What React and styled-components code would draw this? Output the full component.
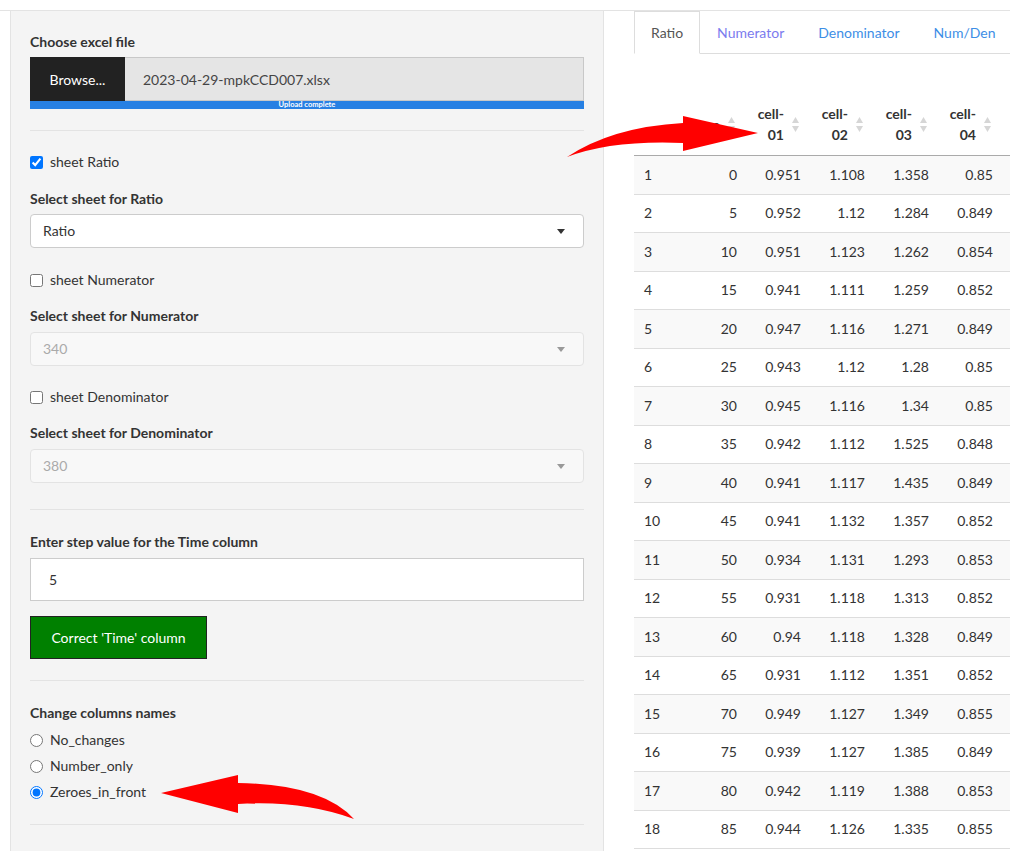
import React from "react"
import styled, { createGlobalStyle } from "styled-components"

const GlobalStyle = createGlobalStyle`
html, body {
  margin: 0;
  padding: 0;
  background: #fff;
  overflow: hidden;
}
body {
  font-family: 'Lato', 'Noto Sans', sans-serif;
  font-size: 14px;
  color: #333;
}
`

const rows = [
    [1, 0, "0.951", "1.108", "1.358", "0.85"],
    [2, 5, "0.952", "1.12", "1.284", "0.849"],
    [3, 10, "0.951", "1.123", "1.262", "0.854"],
    [4, 15, "0.941", "1.111", "1.259", "0.852"],
    [5, 20, "0.947", "1.116", "1.271", "0.849"],
    [6, 25, "0.943", "1.12", "1.28", "0.85"],
    [7, 30, "0.945", "1.116", "1.34", "0.85"],
    [8, 35, "0.942", "1.112", "1.525", "0.848"],
    [9, 40, "0.941", "1.117", "1.435", "0.849"],
    [10, 45, "0.941", "1.132", "1.357", "0.852"],
    [11, 50, "0.934", "1.131", "1.293", "0.853"],
    [12, 55, "0.931", "1.118", "1.313", "0.852"],
    [13, 60, "0.94", "1.118", "1.328", "0.849"],
    [14, 65, "0.931", "1.112", "1.351", "0.852"],
    [15, 70, "0.949", "1.127", "1.349", "0.855"],
    [16, 75, "0.939", "1.127", "1.385", "0.849"],
    [17, 80, "0.942", "1.119", "1.388", "0.853"],
    [18, 85, "0.944", "1.126", "1.335", "0.855"],
]

const SortIcon = () => (
    <SortSvg width="7" height="15" viewBox="0 0 7 15">
        <path d="M3.5 0 L7 6 L0 6 Z" fill="#d6d6d6" />
        <path d="M0 9 L7 9 L3.5 15 Z" fill="#d6d6d6" />
    </SortSvg>
)

const Arrows = () => (
    <Overlay width="1010" height="851" viewBox="0 0 1010 851">
        <path d="M567 157 Q612 127 683 123 L683 116 L758 133 L683 151 L683 143 Q612 140 567 157 Z" fill="#ff0000" />
        <path d="M161 793 L238 775 L238 783 Q322 784 354 819 Q302 800 238 804 L238 813 Z" fill="#ff0000" />
    </Overlay>
)

const App = () => {
    return (
        <Page>
            <GlobalStyle />
            <Layout>
                <Gutter />
                <Sidebar>
                    <Label $mt={0}>Choose excel file</Label>
                    <FileRow>
                        <BrowseButton>Browse...</BrowseButton>
                        <FileName>2023-04-29-mpkCCD007.xlsx</FileName>
                    </FileRow>
                    <Progress>Upload complete</Progress>
                    <Divider $mt={21} />

                    <CheckRow $mt={20}>
                        <input type="checkbox" defaultChecked />
                        <span>sheet Ratio</span>
                    </CheckRow>
                    <Label $mt={15}>Select sheet for Ratio</Label>
                    <SelectBox $mt={4}>
                        Ratio
                        <Caret />
                    </SelectBox>

                    <CheckRow $mt={21}>
                        <input type="checkbox" />
                        <span>sheet Numerator</span>
                    </CheckRow>
                    <Label $mt={14}>Select sheet for Numerator</Label>
                    <SelectBox $mt={5} $disabled>
                        340
                        <Caret $disabled />
                    </SelectBox>

                    <CheckRow $mt={20}>
                        <input type="checkbox" />
                        <span>sheet Denominator</span>
                    </CheckRow>
                    <Label $mt={14}>Select sheet for Denominator</Label>
                    <SelectBox $mt={5} $disabled>
                        380
                        <Caret $disabled />
                    </SelectBox>
                    <Divider $mt={26} />

                    <Label $mt={21}>Enter step value for the Time column</Label>
                    <NumberInput>5</NumberInput>
                    <GreenButton>Correct 'Time' column</GreenButton>
                    <Divider $mt={21} />

                    <Label $mt={21}>Change columns names</Label>
                    <CheckRow $mt={5}>
                        <input type="radio" name="cols" />
                        <span>No_changes</span>
                    </CheckRow>
                    <CheckRow $mt={4}>
                        <input type="radio" name="cols" />
                        <span>Number_only</span>
                    </CheckRow>
                    <CheckRow $mt={4}>
                        <input type="radio" name="cols" defaultChecked />
                        <span>Zeroes_in_front</span>
                    </CheckRow>
                    <Divider $mt={21} />
                </Sidebar>

                <Main>
                    <Tabs>
                        <Tab $active>Ratio</Tab>
                        <Tab $color="#7b7bee">Numerator</Tab>
                        <Tab>Denominator</Tab>
                        <Tab>Num/Den</Tab>
                    </Tabs>
                    <Table>
                        <colgroup>
                            <col style={{ width: 56 }} />
                            <col style={{ width: 57 }} />
                            <col style={{ width: 64 }} />
                            <col style={{ width: 64 }} />
                            <col style={{ width: 64 }} />
                            <col />
                        </colgroup>
                        <thead>
                            <tr>
                                <Th />
                                <Th><HeadInner><span>Time</span><SortIcon /></HeadInner></Th>
                                {["01", "02", "03", "04"].map((n, i) => (
                                    <Th key={n} $last={i === 3}>
                                        <HeadInner>
                                            <span>cell-<br />{n}</span>
                                            <SortIcon />
                                        </HeadInner>
                                    </Th>
                                ))}
                            </tr>
                        </thead>
                        <tbody>
                            {rows.map((r, idx) => (
                                <Tr key={r[0]} $striped={idx % 2 === 0}>
                                    <Td $left>{r[0]}</Td>
                                    <Td>{r[1]}</Td>
                                    <Td>{r[2]}</Td>
                                    <Td>{r[3]}</Td>
                                    <Td>{r[4]}</Td>
                                    <Td $last>{r[5]}</Td>
                                </Tr>
                            ))}
                        </tbody>
                    </Table>
                </Main>
            </Layout>
            <Arrows />
        </Page>
    )
}
export default App

const Page = styled.div`
position: relative;
width: 1010px;
height: 851px;
overflow: hidden;
`
const Overlay = styled.svg`
position: absolute;
left: 0;
top: 0;
pointer-events: none;
`
const Layout = styled.div`
display: flex;
margin-top: 10px;
border-top: 1px solid #e3e3e3;
height: 900px;
`
const Gutter = styled.div`
width: 10px;
flex-shrink: 0;
`
const Sidebar = styled.div`
width: 594px;
box-sizing: border-box;
flex-shrink: 0;
background: #f4f4f4;
border-left: 1px solid #e3e3e3;
border-right: 1px solid #e3e3e3;
padding: 20px 19px;
`
const Label = styled.label`
display: block;
font-weight: 700;
line-height: 22px;
color: #333;
margin-top: ${p => p.$mt}px;
`
const FileRow = styled.div`
display: flex;
height: 44px;
margin-top: 4px;
`
const BrowseButton = styled.div`
width: 95px;
background: #222;
color: #fff;
display: flex;
align-items: center;
justify-content: center;
`
const FileName = styled.div`
flex: 1;
background: #e5e5e5;
border: 1px solid #c8c8c8;
border-left: none;
display: flex;
align-items: center;
padding-left: 18px;
color: #444;
`
const Progress = styled.div`
height: 8px;
background: #2780e3;
color: #fff;
font-size: 7.5px;
font-weight: 700;
line-height: 8px;
text-align: center;
`
const Divider = styled.div`
height: 1px;
background: #e3e3e3;
margin-top: ${p => p.$mt}px;
`
const CheckRow = styled.label`
display: flex;
align-items: center;
gap: 7px;
height: 22px;
line-height: 20px;
margin-top: ${p => p.$mt}px;
color: #333;
input {
  width: 13px;
  height: 13px;
  margin: 0;
  accent-color: #0075ff;
}
`
const SelectBox = styled.div`
position: relative;
height: 34px;
box-sizing: border-box;
margin-top: ${p => p.$mt}px;
background: ${p => p.$disabled ? "#f8f8f8" : "#fff"};
border: 1px solid ${p => p.$disabled ? "#e3e3e3" : "#ccc"};
border-radius: 4px;
display: flex;
align-items: center;
padding-left: 12px;
padding-bottom: 1px;
color: ${p => p.$disabled ? "#aaa" : "#333"};
`
const Caret = styled.span`
position: absolute;
right: 18px;
top: 14px;
width: 0;
height: 0;
border-left: 4.5px solid transparent;
border-right: 4.5px solid transparent;
border-top: 5px solid ${p => p.$disabled ? "#999" : "#333"};
`
const NumberInput = styled.div`
height: 43px;
box-sizing: border-box;
margin-top: 5px;
background: #fff;
border: 1px solid #ccc;
display: flex;
align-items: center;
padding-left: 18px;
padding-bottom: 1px;
color: #333;
`
const GreenButton = styled.div`
width: 177px;
height: 43px;
box-sizing: border-box;
margin-top: 15px;
background: #008000;
border: 1px solid #222;
color: #fff;
display: flex;
align-items: center;
justify-content: center;
`
const Main = styled.div`
margin-left: 30px;
flex: 1;
min-width: 0;
`
const Tabs = styled.div`
display: flex;
height: 42px;
border-bottom: 1px solid #ddd;
`
const Tab = styled.div`
display: flex;
align-items: center;
padding: 0 16px;
margin-bottom: -1px;
border: 1px solid ${p => p.$active ? "#ddd" : "transparent"};
border-bottom-color: ${p => p.$active ? "#fff" : "transparent"};
background: ${p => p.$active ? "#fff" : "transparent"};
color: ${p => p.$active ? "#555" : (p.$color || "#3d8ee6")};
white-space: nowrap;
`
const Table = styled.table`
width: 100%;
table-layout: fixed;
border-collapse: collapse;
margin-top: 41px;
`
const Th = styled.th`
padding: 8px ${p => p.$last ? 19 : 12}px 10px 4px;
line-height: 21px;
font-weight: 700;
color: #333;
vertical-align: middle;
border-bottom: 1px solid #aaa;
`
const HeadInner = styled.div`
display: flex;
align-items: center;
justify-content: flex-end;
gap: 8px;
text-align: right;
`
const SortSvg = styled.svg`
flex-shrink: 0;
`
const Tr = styled.tr`
background: ${p => p.$striped ? "#f9f9f9" : "#fff"};
`
const Td = styled.td`
padding: 7.5px ${p => p.$last ? 17 : 10}px 8.5px 10px;
line-height: 21.5px;
border-bottom: 1px solid #ddd;
text-align: ${p => p.$left ? "left" : "right"};
color: #333;
white-space: nowrap;
`
